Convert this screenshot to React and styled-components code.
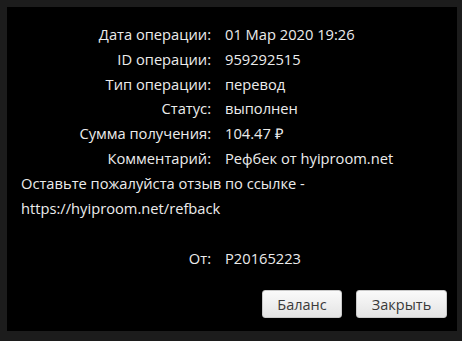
import React from 'react';
import styled, { createGlobalStyle } from 'styled-components';

const GlobalStyle = createGlobalStyle`
  html, body {
    margin: 0;
    padding: 0;
    background: #1c1c1c;
  }
  body {
    font-family: "Open Sans", "Liberation Sans", sans-serif;
  }
`;

const Screen = styled.div`
  width: 462px;
  height: 341px;
  padding: 7px 5px 10px 7px;
  box-sizing: border-box;
`;

const Modal = styled.div`
  width: 450px;
  height: 324px;
  background: #000;
  box-sizing: border-box;
  padding: 15px 10px 10px 14px;
  display: flex;
  flex-direction: column;
`;

const Details = styled.div`
  display: grid;
  grid-template-columns: 190px 1fr;
  column-gap: 14px;
  font-size: 14.7px;
  line-height: 24.8px;
  color: #ececec;
`;

const Label = styled.div`
  text-align: right;
`;

const Value = styled.div``;

const Wide = styled.div`
  grid-column: 1 / -1;
  margin-bottom: ${p => (p.$gap ? 26 : 0)}px;
`;

const Actions = styled.div`
  margin-top: auto;
  display: flex;
  justify-content: flex-end;
  gap: 14px;
  padding-bottom: 3px;
`;

const Button = styled.button`
  height: 28px;
  width: ${p => p.$w}px;
  box-sizing: border-box;
  border: 1px solid #c9c9c9;
  border-radius: 3px;
  background: linear-gradient(#fafafa, #e4e4e4);
  color: #3a3a3a;
  font-family: "Open Sans", "Liberation Sans", sans-serif;
  font-size: 14.5px;
  padding: 0;
  cursor: pointer;
`;

const rows = [
  ['Дата операции:', '01 Мар 2020 19:26'],
  ['ID операции:', '959292515'],
  ['Тип операции:', 'перевод'],
  ['Статус:', 'выполнен'],
  ['Сумма получения:', '104.47 ₽'],
  ['Комментарий:', 'Рефбек от hyiproom.net'],
];

export default function App() {
  return (
    <>
      <GlobalStyle />
      <Screen>
        <Modal>
          <Details>
            {rows.map(([l, v]) => (
              <React.Fragment key={l}>
                <Label>{l}</Label>
                <Value>{v}</Value>
              </React.Fragment>
            ))}
            <Wide $gap>
              Оставьте пожалуйста отзыв по ссылке -<br />
              https://hyiproom.net/refback
            </Wide>
            <Label>От:</Label>
            <Value>P20165223</Value>
          </Details>
          <Actions>
            <Button $w={80}>Баланс</Button>
            <Button $w={91}>Закрыть</Button>
          </Actions>
        </Modal>
      </Screen>
    </>
  );
}
